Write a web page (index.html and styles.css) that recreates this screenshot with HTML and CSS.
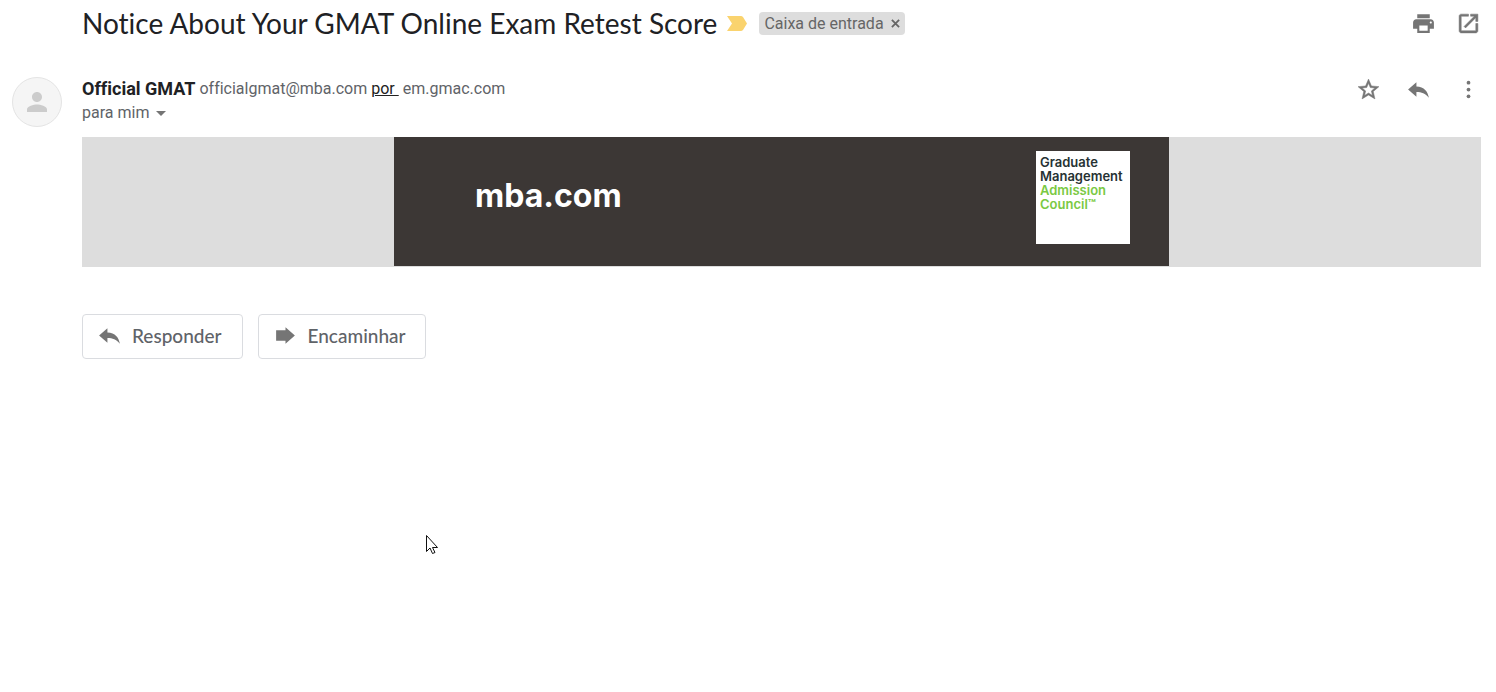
FILE: index.html
```html
<!DOCTYPE html>
<html lang="pt-BR">
<head>
  <meta charset="UTF-8" />
  <meta name="viewport" content="width=device-width, initial-scale=1" />
  <title>Notice About Your GMAT Online Exam Retest Score</title>
  <link rel="stylesheet" href="styles.css">
</head>
<body>
  <header class="subject">
    <h1>Notice About Your GMAT Online Exam Retest Score</h1>
    <svg class="marker" viewBox="0 0 20 15" aria-hidden="true"><path d="M0 0h14q1 0 2 1l4 6.500-4 6.500q-1 1-2 1H0l5-7.500z"/></svg>
    <span class="label">Caixa de entrada
      <button type="button" aria-label="Remover marcador"><svg viewBox="0 0 10 10"><path d="M1 1l8 8M9 1L1 9"/></svg></button>
    </span>
    <div class="actions">
      <button type="button" aria-label="Imprimir tudo"><svg viewBox="0 0 24 24"><path d="M19 8H5c-1.660 0-3 1.340-3 3v6h4v4h12v-4h4v-6c0-1.660-1.340-3-3-3zm-3 11H8v-5h8v5zm3-7c-.55 0-1-.45-1-1s.45-1 1-1 1 .45 1 1-.45 1-1 1zm-1-9H6v4h12V3z"/></svg></button>
      <button type="button" aria-label="Em nova janela"><svg class="bold" viewBox="0 0 24 24"><path d="M19 19H5V5h7V3H5c-1.110 0-2 .9-2 2v14c0 1.100.89 2 2 2h14c1.100 0 2-.9 2-2v-7h-2v7zM14 3v2h3.590l-9.830 9.830 1.410 1.410L19 6.410V10h2V3h-7z"/></svg></button>
    </div>
  </header>

  <main class="message">
    <div class="avatar">
      <svg viewBox="0 0 24 24" aria-hidden="true"><path d="M12 12c2.210 0 4-1.790 4-4s-1.790-4-4-4-4 1.790-4 4 1.790 4 4 4zm0 2c-2.670 0-8 1.340-8 4v2h16v-2c0-2.660-5.330-4-8-4z"/></svg>
    </div>

    <div class="content">
      <div class="sender-row">
        <div class="sender">
          <p class="from"><strong>Official GMAT</strong><span>officialgmat@mba.com</span><a href="#por">por&nbsp;</a><span>em.gmac.com</span></p>
          <button type="button" class="to">para mim <svg viewBox="0 0 10 5"><path d="M0 0h10L5 5z"/></svg></button>
        </div>
        <div class="actions message-actions">
          <button type="button" aria-label="Com estrela"><svg class="bold" viewBox="0 0 24 24"><path d="M22 9.240l-7.190-.62L12 2 9.190 8.630 2 9.240l5.460 4.730L5.820 21 12 17.270 18.180 21l-1.630-7.030L22 9.240zM12 15.400l-3.760 2.270 1-4.280-3.320-2.880 4.380-.38L12 6.100l1.710 4.040 4.380.38-3.320 2.880 1 4.280L12 15.400z"/></svg></button>
          <button type="button" aria-label="Responder"><svg viewBox="0 0 24 24"><path d="M10 9V5l-8 7 8 7v-4.500c5 0 8.500 1.500 12 5.500-1-6-4.500-11-12-11z"/></svg></button>
          <button type="button" aria-label="Mais"><svg viewBox="0 0 24 24"><circle cx="12" cy="5.500" r="1.800"/><circle cx="12" cy="12" r="1.800"/><circle cx="12" cy="18.500" r="1.800"/></svg></button>
        </div>
      </div>

      <div class="mail-body">
        <div class="banner">
          <div class="brand">mba.com</div>
          <div class="gmac">
            <p>Graduate</p>
            <p>Management</p>
            <p class="green">Admission</p>
            <p class="green">Council™</p>
          </div>
        </div>
      </div>

      <div class="reply-bar">
        <button type="button"><svg viewBox="0 0 24 24"><path d="M10 9V5l-8 7 8 7v-4.500c5 0 8.500 1.500 12 5.500-1-6-4.500-11-12-11z"/></svg>Responder</button>
        <button type="button"><svg viewBox="0 0 24 24"><path d="M12 7V4l9 8-9 8v-3H3V7z"/></svg>Encaminhar</button>
      </div>
    </div>
  </main>

  <svg class="cursor" viewBox="0 0 12 19" aria-hidden="true"><path d="M.5.5v16l3.500-3.500 2.500 5.500 2.500-1-2.500-5h5z"/></svg>
</body>
</html>
```

FILE: styles.css
```css
* {
  box-sizing: border-box;
}

body {
  font-family: Roboto, Arial, sans-serif;
  font-size: 16px;
  font-variant-ligatures: none;
  margin: 0;
  color: #5f6368;
  background: #fff;
}

h1, p {
  margin: 0;
}

button {
  font: inherit;
  color: inherit;
  background: none;
  border: 0;
  padding: 0;
  cursor: pointer;
}

svg {
  display: block;
  fill: #757575;
}

.bold {
  stroke: #757575;
  stroke-width: 0.5;
}

.subject {
  display: flex;
  align-items: center;
  height: 46px;
  padding: 0 15px 0 82px;
}

h1 {
  font-family: Lato, sans-serif;
  font-size: 28px;
  font-weight: 400;
  line-height: 36px;
  color: #202124;
}

.marker {
  width: 20px;
  height: 15px;
  margin: 0 12px 0 10px;
  fill: #fad36e;
}

.label {
  display: flex;
  align-items: center;
  gap: 7px;
  height: 23px;
  padding: 0 5px;
  border-radius: 4px;
  background: #ddd;
  color: #666;
}

.label svg {
  width: 9px;
  height: 9px;
  fill: none;
  stroke: #666;
  stroke-width: 2;
}

.actions {
  display: flex;
  gap: 20px;
  margin-left: auto;
}

.actions svg {
  width: 25px;
  height: 25px;
}

.message {
  display: flex;
  gap: 20px;
  padding: 31px 15px 0 12px;
}

.avatar {
  display: flex;
  align-items: center;
  justify-content: center;
  flex: none;
  width: 50px;
  height: 50px;
  border: 1px solid #e4e4e4;
  border-radius: 50%;
  background: #f5f5f5;
}

.avatar svg {
  width: 30px;
  height: 30px;
  fill: #ccc;
}

.content {
  flex: 1;
}

.sender-row {
  display: flex;
  height: 60px;
}

.from {
  display: flex;
  align-items: center;
  gap: 4px;
  line-height: 24px;
}

.from strong {
  font-size: 18px;
  font-weight: 700;
  color: #202124;
}

.from a {
  color: #222;
}

.to {
  display: flex;
  align-items: center;
  gap: 7px;
  line-height: 24px;
}

.to svg {
  width: 10px;
  height: 5px;
}

.message-actions {
  gap: 25px;
}

.message-actions button {
  height: 25px;
}

.mail-body {
  height: 130px;
  background: #ddd;
}

.banner {
  display: flex;
  justify-content: space-between;
  align-items: flex-start;
  max-width: 775px;
  height: 129px;
  margin: 0 auto;
  padding: 14px 39px 0 81px;
  background: #3c3735;
}

.brand {
  font-family: Inter, sans-serif;
  font-size: 32px;
  font-weight: 700;
  line-height: 90px;
  color: #fff;
}

.gmac {
  width: 94px;
  height: 93px;
  padding: 4px;
  background: #fff;
  color: #263233;
  font-family: Inter, sans-serif;
  font-size: 13px;
  font-weight: 600;
  line-height: 14px;
}

.green {
  color: #7ac943;
}

.reply-bar {
  display: flex;
  gap: 15px;
  padding-top: 47px;
}

.reply-bar button {
  display: flex;
  align-items: center;
  gap: 10px;
  height: 45px;
  padding: 0 20px 2px 14px;
  border: 1px solid #dadce0;
  border-radius: 4px;
  font-family: Lato, sans-serif;
  font-size: 19px;
  font-weight: 500;
}

.reply-bar svg {
  width: 25px;
  height: 25px;
}

.cursor {
  position: absolute;
  left: 426px;
  top: 535px;
  width: 12px;
  height: 19px;
  fill: #fff;
  stroke: #111;
}
```
